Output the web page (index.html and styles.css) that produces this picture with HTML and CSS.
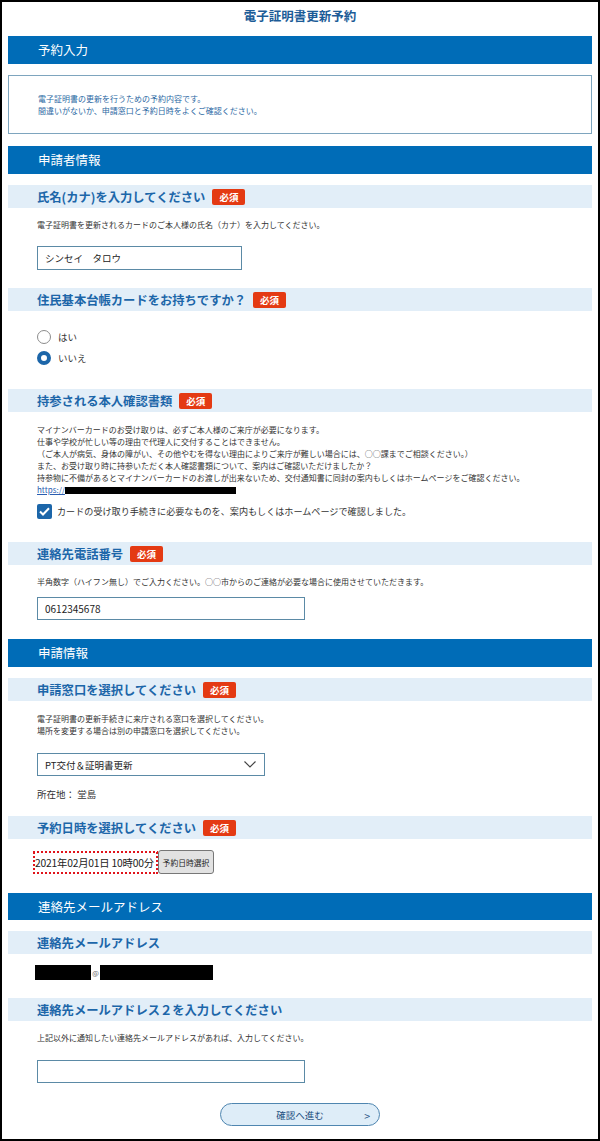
FILE: index.html
```html
<!DOCTYPE html>
<html lang="ja">
<head>
<meta charset="utf-8">
<title>電子証明書更新予約</title>
<link rel="stylesheet" href="styles.css">
</head>
<body>
<div class="page">
  <h1 class="title">電子証明書更新予約</h1>

  <h2 class="bar">予約入力</h2>
  <div class="info">
    <p>電子証明書の更新を行うための予約内容です。</p>
    <p>間違いがないか、申請窓口と予約日時をよくご確認ください。</p>
  </div>

  <h2 class="bar bar--section">申請者情報</h2>

  <h3 class="field-head">氏名(カナ)を入力してください<span class="req">必須</span></h3>
  <p class="desc desc--name">電子証明書を更新されるカードのご本人様の氏名（カナ）を入力してください。</p>
  <input class="text-input text-input--name" type="text" value="シンセイ　タロウ">

  <h3 class="field-head field-head--after-input">住民基本台帳カードをお持ちですか？<span class="req">必須</span></h3>
  <div class="choices">
    <label class="choice"><input class="radio" type="radio" name="card">はい</label>
    <label class="choice"><input class="radio" type="radio" name="card" checked>いいえ</label>
  </div>

  <h3 class="field-head field-head--after-choices">持参される本人確認書類<span class="req">必須</span></h3>
  <div class="notes">
    <p>マイナンバーカードのお受け取りは、必ずご本人様のご来庁が必要になります。</p>
    <p>仕事や学校が忙しい等の理由で代理人に交付することはできません。</p>
    <p>（ご本人が病気、身体の障がい、その他やむを得ない理由によりご来庁が難しい場合には、○○課までご相談ください。）</p>
    <p>また、お受け取り時に持参いただく本人確認書類について、案内はご確認いただけましたか？</p>
    <p>持参物に不備があるとマイナンバーカードのお渡しが出来ないため、交付通知書に同封の案内もしくはホームページをご確認ください。</p>
    <p class="link-line"><a class="link" href="#">https://</a><span class="redact redact--url"></span></p>
  </div>
  <label class="check">
    <span class="check-box"><svg width="11" height="9" viewBox="0 0 11 9"><path d="M1 4.5 L4 7.5 L10 1.2" fill="none" stroke="#fff" stroke-width="2"/></svg></span>
    カードの受け取り手続きに必要なものを、案内もしくはホームページで確認しました。
  </label>

  <h3 class="field-head field-head--after-check">連絡先電話番号<span class="req">必須</span></h3>
  <p class="desc desc--tel">半角数字（ハイフン無し）でご入力ください。○○市からのご連絡が必要な場合に使用させていただきます。</p>
  <input class="text-input text-input--tel" type="text" value="0612345678">

  <h2 class="bar bar--after-input">申請情報</h2>

  <h3 class="field-head">申請窓口を選択してください<span class="req">必須</span></h3>
  <div class="desc desc--window">
    <p>電子証明書の更新手続きに来庁される窓口を選択してください。</p>
    <p>場所を変更する場合は別の申請窓口を選択してください。</p>
  </div>
  <div class="select">
    <span>PT交付＆証明書更新</span>
    <svg width="12" height="7" viewBox="0 0 12 7"><path d="M0.5 0.5 L6 6 L11.5 0.5" fill="none" stroke="#444" stroke-width="1.2"/></svg>
  </div>
  <p class="place">所在地： 堂島</p>

  <h3 class="field-head field-head--after-place">予約日時を選択してください<span class="req">必須</span></h3>
  <div class="date-row">
    <span class="date-value">2021年02月01日 10時00分</span>
    <button class="date-btn" type="button">予約日時選択</button>
  </div>

  <h2 class="bar bar--after-date">連絡先メールアドレス</h2>

  <h3 class="field-head">連絡先メールアドレス</h3>
  <div class="mail-row">
    <span class="redact redact--user"></span><span class="at">@</span><span class="redact redact--domain"></span>
  </div>

  <h3 class="field-head field-head--after-mail">連絡先メールアドレス２を入力してください</h3>
  <p class="desc desc--mail2">上記以外に通知したい連絡先メールアドレスがあれば、入力してください。</p>
  <input class="text-input text-input--mail" type="text" value="">

  <div class="actions">
    <button class="next-btn" type="button"><span>確認へ進む</span><span class="next-arrow">&gt;</span></button>
  </div>
</div>
</body>
</html>
```

FILE: styles.css
```css
* {
  box-sizing: border-box;
}

html, body {
  margin: 0;
  padding: 0;
  background: #fff;
}

body {
  font-family: "Noto Sans CJK JP", "Noto Sans", sans-serif;
  color: #333;
}

p {
  margin: 0;
}

.page {
  width: 600px;
  height: 1141px;
  border: 2px solid #000;
  padding: 0 6px;
  overflow: hidden;
}

.title {
  margin: 0;
  height: 34px;
  line-height: 28px;
  text-align: center;
  font-size: 12.5px;
  font-weight: bold;
  color: #1c5c97;
}

.bar {
  margin: 0;
  height: 28px;
  line-height: 28px;
  padding-left: 30px;
  background: #006cb7;
  color: #fff;
  font-size: 12.5px;
  font-weight: normal;
}

.bar--section {
  margin-top: 12px;
}

.bar--after-input {
  margin-top: 19px;
}

.bar--after-date {
  margin-top: 19px;
  height: 27px;
  line-height: 27px;
}

.info {
  margin-top: 11px;
  height: 59px;
  border: 1px solid #7ea5be;
  padding: 17px 0 0 29px;
  font-size: 8px;
  line-height: 12px;
  color: #2b68a3;
}

.field-head {
  margin: 11px 0 0;
  height: 23px;
  padding-left: 29px;
  display: flex;
  align-items: center;
  gap: 7px;
  background: #e2eef8;
  color: #1c66a9;
  font-size: 12.3px;
  font-weight: bold;
}

.field-head--after-input {
  margin-top: 18px;
}

.field-head--after-choices {
  margin-top: 21px;
}

.field-head--after-check {
  margin-top: 21px;
}

.field-head--after-place {
  margin-top: 14px;
}

.field-head--after-mail {
  margin-top: 18px;
}

.req {
  display: inline-block;
  width: 33px;
  height: 16px;
  line-height: 16px;
  border-radius: 2px;
  background: #e43a13;
  color: #fff;
  font-size: 9.5px;
  font-weight: bold;
  text-align: center;
}

.desc {
  padding-left: 29px;
  font-size: 8px;
  line-height: 12px;
  color: #333;
}

.desc--name {
  margin-top: 11px;
}

.desc--tel {
  margin-top: 11px;
}

.desc--window {
  margin-top: 12px;
}

.desc--mail2 {
  margin-top: 11px;
}

.text-input {
  display: block;
  margin-left: 29px;
  height: 23px;
  border: 1px solid #5b8aa6;
  border-radius: 0;
  padding: 0 7px;
  font-family: "Noto Sans CJK JP", "Noto Sans", sans-serif;
  font-size: 9.5px;
  color: #222;
  background: #fff;
  outline: none;
}

.text-input--name {
  margin-top: 15px;
  width: 205px;
  height: 24px;
}

.text-input--tel {
  margin-top: 9px;
  width: 268px;
  font-size: 10px;
}

.text-input--mail {
  margin-top: 16px;
  width: 268px;
}

.choices {
  margin-top: 15px;
  padding-left: 29px;
}

.choice {
  display: flex;
  align-items: center;
  gap: 7px;
  height: 21px;
  font-size: 9.5px;
  color: #333;
}

.radio {
  appearance: none;
  -webkit-appearance: none;
  margin: 0;
  width: 14px;
  height: 14px;
  border-radius: 50%;
  border: 1px solid #8c8c8c;
  background: #fff;
}

.radio:checked {
  border: 4.5px solid #1c66a9;
}

.notes {
  margin-top: 12px;
  padding-left: 29px;
  font-size: 8px;
  line-height: 12px;
  color: #333;
}

.link-line {
  display: flex;
  align-items: center;
}

.link {
  color: #2a5db0;
  text-decoration: underline;
}

.redact {
  display: inline-block;
  background: #000;
}

.redact--url {
  width: 171px;
  height: 7px;
}

.check {
  margin-top: 5px;
  padding-left: 29px;
  height: 20px;
  display: flex;
  align-items: center;
  gap: 5px;
  font-size: 9.1px;
  color: #333;
}

.check-box {
  width: 15px;
  height: 15px;
  border-radius: 2px;
  background: #1c66a9;
  display: flex;
  align-items: center;
  justify-content: center;
}

.select {
  margin: 16px 0 0 29px;
  width: 228px;
  height: 23px;
  border: 1px solid #5b8aa6;
  padding: 0 8px 0 7px;
  display: flex;
  align-items: center;
  justify-content: space-between;
  font-size: 9.5px;
  color: #222;
}

.place {
  margin-top: 10px;
  padding-left: 29px;
  font-size: 9.5px;
  line-height: 16px;
  color: #333;
}

.date-row {
  margin: 11px 0 0 25px;
  display: flex;
  align-items: center;
  height: 24px;
}

.date-value {
  height: 23px;
  width: 125px;
  display: flex;
  align-items: center;
  padding: 0 2px;
  font-size: 10.3px;
  letter-spacing: -0.2px;
  color: #222;
  white-space: nowrap;
  background:
    repeating-linear-gradient(90deg, #e0141b 0 2px, transparent 2px 4px) left top / 100% 2px no-repeat,
    repeating-linear-gradient(90deg, #e0141b 0 2px, transparent 2px 4px) left bottom / 100% 2px no-repeat,
    repeating-linear-gradient(0deg, #e0141b 0 2px, transparent 2px 4px) left top / 2px 100% no-repeat,
    repeating-linear-gradient(0deg, #e0141b 0 2px, transparent 2px 4px) right top / 2px 100% no-repeat;
}

.date-btn {
  margin-left: 0;
  width: 56px;
  height: 24px;
  padding: 0;
  border: 1px solid #777;
  border-radius: 3px;
  background: #e2e2e2;
  font-family: "Noto Sans CJK JP", "Noto Sans", sans-serif;
  font-size: 7.8px;
  color: #222;
}

.mail-row {
  margin: 11px 0 0 27px;
  height: 15px;
  display: flex;
  align-items: center;
}

.redact--user {
  width: 56px;
  height: 15px;
}

.at {
  width: 9px;
  text-align: center;
  font-size: 7px;
  color: #666;
}

.redact--domain {
  width: 113px;
  height: 15px;
}

.actions {
  margin-top: 20px;
  display: flex;
  justify-content: center;
}

.next-btn {
  position: relative;
  width: 160px;
  height: 23px;
  border: 1px solid #4f86b0;
  border-radius: 12px;
  background: #deedf8;
  font-family: "Noto Sans CJK JP", "Noto Sans", sans-serif;
  font-size: 9.5px;
  color: #1c4f80;
  padding: 0;
}

.next-arrow {
  position: absolute;
  right: 9px;
  top: 50%;
  transform: translateY(-50%);
  font-size: 10.5px;
}
```
